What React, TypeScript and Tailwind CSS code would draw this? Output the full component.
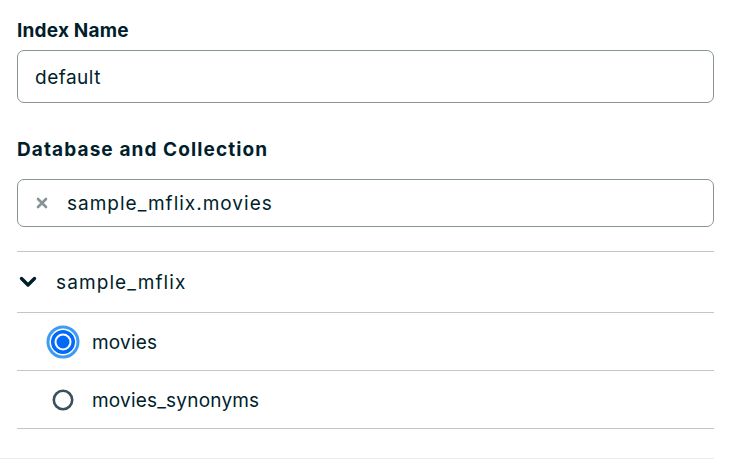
import React from "react";

const font = { fontFamily: "Inter, 'Noto Sans', sans-serif" };

const CheckedRadio = () => (
  <svg width="34" height="34" viewBox="0 0 34 34" className="shrink-0">
    <circle cx="17" cy="17" r="15" fill="none" stroke="#3d9cf2" strokeWidth="3" />
    <circle cx="17" cy="17" r="12.5" fill="#ffffff" />
    <circle cx="17" cy="17" r="12" fill="#016bf8" />
    <circle cx="17" cy="17" r="8.5" fill="#ffffff" />
    <circle cx="17" cy="17" r="6.5" fill="#016bf8" />
  </svg>
);

const EmptyRadio = () => (
  <svg width="34" height="34" viewBox="0 0 34 34" className="shrink-0">
    <circle cx="17" cy="17" r="9.2" fill="#ffffff" stroke="#3d4f58" strokeWidth="2.6" />
  </svg>
);

export default function App() {
  return (
    <div className="w-[714px] bg-white text-[#001e2b]" style={font}>
      <div className="pl-[17px]">
        <label className="block pt-[19px] text-[19px] leading-[24px] font-bold tracking-[0.2px]">
          Index Name
        </label>
        <div className="mt-[7px] flex h-[53px] items-center rounded-[7px] border border-[#889397] px-[17px] pt-[4px] text-[19px] tracking-[0.5px]">
          default
        </div>

        <label className="mt-[35px] block text-[19px] leading-[24px] font-bold tracking-[1.1px]">
          Database and Collection
        </label>
        <div className="mt-[17px] flex h-[48px] items-center rounded-[7px] border border-[#889397] text-[19px] tracking-[1px]">
          <span className="ml-[18px] mr-[19px] flex w-[12px] justify-center">
            <svg width="12" height="12" viewBox="0 0 12 12">
              <path d="M2 2 L10 10 M10 2 L2 10" stroke="#889397" strokeWidth="2.6" strokeLinecap="round" />
            </svg>
          </span>
          <span className="pt-[2px]">sample_mflix.movies</span>
        </div>

        <div className="mt-[24px] border-t border-[#c1c7c6]">
          <div className="flex h-[61px] items-center border-b border-[#c1c7c6] text-[19px] tracking-[1.1px]">
            <svg width="18" height="12" viewBox="0 0 18 12" className="ml-[2px] mr-[19px]">
              <path d="M2.5 2.5 L9 9 L15.5 2.5" fill="none" stroke="#001e2b" strokeWidth="3.4" strokeLinecap="round" strokeLinejoin="round" />
            </svg>
            <span className="pt-[2px]">sample_mflix</span>
          </div>
          <div className="flex h-[58px] items-center border-b border-[#c1c7c6] pl-[29px] text-[19px] tracking-[0.2px]">
            <CheckedRadio />
            <span className="ml-[12px] pt-[3px]">movies</span>
          </div>
          <div className="flex h-[58px] items-center border-b border-[#c1c7c6] pl-[29px] text-[19px] tracking-[0.2px]">
            <EmptyRadio />
            <span className="ml-[12px] pt-[3px]">movies_synonyms</span>
          </div>
        </div>
      </div>
      <div className="h-[30px] border-b border-[#e8edeb]" />
    </div>
  );
}
